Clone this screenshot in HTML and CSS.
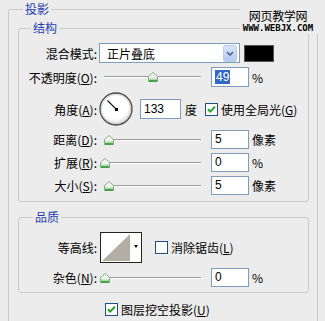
FILE: index.html
```html
<!DOCTYPE html>
<html>
<head>
<meta charset="utf-8">
<link rel="stylesheet" href="styles.css">
</head>
<body>
<div class="dialog">
  <div class="watermark">
    <div class="wm-cn">网页教学网</div>
    <div class="wm-en">WWW.WEBJX.COM</div>
  </div>
  <div class="outer">
    <div class="legend outer-legend">投影</div>
    <div class="group structure">
      <div class="legend structure-legend">结构</div>
      <div class="row r-blend">
        <span class="label">混合模式:</span>
        <div class="select">
          <span class="select-text">正片叠底</span>
          <span class="select-btn">
            <svg width="14" height="17" viewBox="0 0 14 17"><defs><linearGradient id="bg" x1="0" y1="0" x2="0" y2="1"><stop offset="0" stop-color="#dbe6fb"/><stop offset="1" stop-color="#b4c8f0"/></linearGradient></defs><rect x="0.5" y="0.5" width="13" height="16" rx="2" fill="url(#bg)" stroke="#b9cbef"/><path d="M4 7 L7 10 L10 7" fill="none" stroke="#4d6185" stroke-width="1.6"/></svg>
          </span>
        </div>
        <span class="swatch"></span>
      </div>
      <div class="row r-opacity">
        <span class="label">不透明度(<u>O</u>):</span>
        <div class="slider"><span class="track"></span><span class="thumb" style="left:48px"><svg width="10" height="10" viewBox="0 0 10 10"><defs><linearGradient id="tg1" x1="0" y1="0" x2="0" y2="1"><stop offset="0" stop-color="#ffffff"/><stop offset="0.6" stop-color="#e4f2e4"/><stop offset="1" stop-color="#5fb85f"/></linearGradient></defs><path d="M0.5 4.5 L5 0.5 L9.5 4.5 L9.5 9.5 L0.5 9.5 Z" fill="url(#tg1)" stroke="#8aa88a"/><path d="M1 9 L9 9" stroke="#2f9a2f" stroke-width="1.4"/></svg></span></div>
        <span class="input"><span class="sel">49</span></span>
        <span class="unit">%</span>
      </div>
      <div class="row r-angle">
        <span class="label">角度(<u>A</u>):</span>
        <span class="dial"><svg width="34" height="34" viewBox="0 0 34 34"><defs><radialGradient id="dg" cx="0.45" cy="0.4" r="0.6"><stop offset="0.7" stop-color="#ffffff"/><stop offset="1" stop-color="#d6d6d6"/></radialGradient></defs><circle cx="17" cy="17" r="16" fill="url(#dg)" stroke="#4a4a4a" stroke-width="1.3"/><circle cx="17" cy="17" r="14.6" fill="none" stroke="#c8c8c8" stroke-width="0.8"/><path d="M17.5 17.5 L8.5 8.5" stroke="#111" stroke-width="1.1"/><rect x="16" y="16" width="3" height="3" fill="#000"/></svg></span>
        <span class="input angle-input">133</span>
        <span class="unit deg">度</span>
        <span class="check checked"><svg width="13" height="13" viewBox="0 0 13 13"><rect x="0.5" y="0.5" width="12" height="12" fill="#fff" stroke="#1c5180"/><path d="M3 6.2 L5.2 8.6 L10 3.6" fill="none" stroke="#21a121" stroke-width="2"/></svg></span>
        <span class="check-text">使用全局光(<u>G</u>)</span>
      </div>
      <div class="row r-slider">
        <span class="label">距离(<u>D</u>):</span>
        <div class="slider"><span class="track"></span><span class="thumb" style="left:4px"><svg width="10" height="10" viewBox="0 0 10 10"><defs><linearGradient id="tg2" x1="0" y1="0" x2="0" y2="1"><stop offset="0" stop-color="#ffffff"/><stop offset="0.6" stop-color="#e4f2e4"/><stop offset="1" stop-color="#5fb85f"/></linearGradient></defs><path d="M0.5 4.5 L5 0.5 L9.5 4.5 L9.5 9.5 L0.5 9.5 Z" fill="url(#tg2)" stroke="#8aa88a"/><path d="M1 9 L9 9" stroke="#2f9a2f" stroke-width="1.4"/></svg></span></div>
        <span class="input">5</span>
        <span class="unit">像素</span>
      </div>
      <div class="row r-slider">
        <span class="label">扩展(<u>R</u>):</span>
        <div class="slider"><span class="track"></span><span class="thumb" style="left:0px"><svg width="10" height="10" viewBox="0 0 10 10"><defs><linearGradient id="tg3" x1="0" y1="0" x2="0" y2="1"><stop offset="0" stop-color="#ffffff"/><stop offset="0.6" stop-color="#e4f2e4"/><stop offset="1" stop-color="#5fb85f"/></linearGradient></defs><path d="M0.5 4.5 L5 0.5 L9.5 4.5 L9.5 9.5 L0.5 9.5 Z" fill="url(#tg3)" stroke="#8aa88a"/><path d="M1 9 L9 9" stroke="#2f9a2f" stroke-width="1.4"/></svg></span></div>
        <span class="input">0</span>
        <span class="unit">%</span>
      </div>
      <div class="row r-slider">
        <span class="label">大小(<u>S</u>):</span>
        <div class="slider"><span class="track"></span><span class="thumb" style="left:4px"><svg width="10" height="10" viewBox="0 0 10 10"><defs><linearGradient id="tg4" x1="0" y1="0" x2="0" y2="1"><stop offset="0" stop-color="#ffffff"/><stop offset="0.6" stop-color="#e4f2e4"/><stop offset="1" stop-color="#5fb85f"/></linearGradient></defs><path d="M0.5 4.5 L5 0.5 L9.5 4.5 L9.5 9.5 L0.5 9.5 Z" fill="url(#tg4)" stroke="#8aa88a"/><path d="M1 9 L9 9" stroke="#2f9a2f" stroke-width="1.4"/></svg></span></div>
        <span class="input">5</span>
        <span class="unit">像素</span>
      </div>
    </div>
    <div class="group quality">
      <div class="legend quality-legend">品质</div>
      <div class="row r-contour">
        <span class="label">等高线:</span>
        <span class="contour"><svg width="42" height="31" viewBox="0 0 42 31"><rect x="0.5" y="0.5" width="41" height="30" fill="#fff" stroke="#222"/><path d="M2 29 L30 2 L30 29 Z" fill="#b3aea3"/><path d="M34 13 L38 13 L36 16 Z" fill="#000"/></svg></span>
        <span class="check unchecked"><svg width="13" height="13" viewBox="0 0 13 13"><rect x="0.5" y="0.5" width="12" height="12" fill="#fff" stroke="#1c5180"/></svg></span>
        <span class="check-text">消除锯齿(<u>L</u>)</span>
      </div>
      <div class="row r-slider r-noise">
        <span class="label">杂色(<u>N</u>):</span>
        <div class="slider"><span class="track"></span><span class="thumb" style="left:0px"><svg width="10" height="10" viewBox="0 0 10 10"><defs><linearGradient id="tg5" x1="0" y1="0" x2="0" y2="1"><stop offset="0" stop-color="#ffffff"/><stop offset="0.6" stop-color="#e4f2e4"/><stop offset="1" stop-color="#5fb85f"/></linearGradient></defs><path d="M0.5 4.5 L5 0.5 L9.5 4.5 L9.5 9.5 L0.5 9.5 Z" fill="url(#tg5)" stroke="#8aa88a"/><path d="M1 9 L9 9" stroke="#2f9a2f" stroke-width="1.4"/></svg></span></div>
        <span class="input">0</span>
        <span class="unit">%</span>
      </div>
    </div>
    <div class="row r-knockout">
      <span class="check checked"><svg width="13" height="13" viewBox="0 0 13 13"><rect x="0.5" y="0.5" width="12" height="12" fill="#fff" stroke="#1c5180"/><path d="M3 6.2 L5.2 8.6 L10 3.6" fill="none" stroke="#21a121" stroke-width="2"/></svg></span>
      <span class="check-text">图层挖空投影(<u>U</u>)</span>
    </div>
  </div>
</div>
</body>
</html>
```

FILE: styles.css
```css
* { box-sizing: border-box; }
html, body { margin: 0; padding: 0; }
body {
  width: 325px;
  height: 321px;
  overflow: hidden;
  background: #ececec;
  font-family: "Noto Sans CJK SC", "Noto Sans", sans-serif;
  font-size: 12px;
  color: #000;
}
u { text-decoration: underline; text-underline-offset: 1px; }

.dialog {
  position: relative;
  padding: 9px 0 0 8px;
}

.watermark {
  position: absolute;
  top: 0;
  left: 240px;
  width: 85px;
  height: 34px;
  padding: 8px 9px 0 0;
  background: #ececec;
  display: flex;
  flex-direction: column;
  align-items: center;
}
.wm-cn {
  font-size: 12px;
  line-height: 16px;
  letter-spacing: -0.3px;
}
.wm-en {
  font-family: "DejaVu Sans Mono", monospace;
  font-weight: bold;
  font-size: 9px;
  line-height: 9px;
}

.outer {
  width: 310px;
  height: 320px;
  border: 1px solid #cbcbcb;
  border-bottom: none;
  border-radius: 3px 3px 0 0;
  padding: 0 8px 0 9px;
}

.legend {
  display: table;
  height: 14px;
  line-height: 14px;
  margin-top: -8px;
  padding: 0 2px;
  background: #ececec;
  color: #1f3fae;
}
.outer-legend { margin-left: 5px; }
.structure-legend { margin-left: 12px; }
.quality-legend { margin-left: 14px; }

.group {
  width: 291px;
  border: 1px solid #cbcbcb;
  border-radius: 3px;
}
.structure {
  margin-top: 12px;
  padding-bottom: 4px;
}
.quality {
  margin-top: 15px;
  padding-bottom: 3px;
}

.row {
  display: flex;
  align-items: center;
  white-space: nowrap;
}
.label {
  width: 78px;
  flex-shrink: 0;
  text-align: right;
}

.r-blend { margin-top: 7px; height: 22px; }
.r-opacity { height: 26px; }
.r-angle { height: 38px; }
.r-slider { height: 23px; }
.r-contour { margin-top: 8px; height: 31px; }
.r-noise { margin-top: 3px; }
.r-knockout { margin-top: 5px; height: 22px; padding-left: 87px; }

.select {
  margin-left: 2px;
  width: 141px;
  height: 20px;
  border: 1px solid #7f9db9;
  background: #fff;
  display: flex;
  align-items: center;
  justify-content: space-between;
  padding: 0 2px 0 7px;
}
.select-btn { display: flex; }
.swatch {
  margin-left: 4px;
  width: 30px;
  height: 17px;
  background: #000;
  border: 1px solid #555;
}

.slider {
  position: relative;
  margin-left: 3px;
  width: 101px;
  height: 12px;
}
.track {
  position: absolute;
  left: 4px;
  right: 0;
  top: 5px;
  height: 2px;
  border-top: 1px solid #9a9a9a;
  border-bottom: 1px solid #ffffff;
}
.thumb {
  position: absolute;
  top: 1px;
  display: flex;
}

.input {
  margin-left: 10px;
  width: 38px;
  height: 19px;
  border: 1px solid #7f9db9;
  background: #fff;
  font-family: "Liberation Sans", "DejaVu Sans", sans-serif;
  font-size: 12px;
  line-height: 17px;
  padding-left: 3px;
}
.sel {
  display: inline-block;
  background: #316ac5;
  color: #fff;
  line-height: 14px;
  padding: 0 1px;
}
.r-opacity .input { height: 20px; line-height: 18px; }
.unit { margin-left: 3px; }

.dial {
  margin-left: 2px;
  display: flex;
}
.angle-input {
  margin-left: 7px;
  width: 41px;
  height: 20px;
  line-height: 18px;
}
.deg { margin-left: 4px; }
.check { display: flex; }
.r-angle .check { margin-left: 8px; }
.check-text { margin-left: 3px; }
.contour { margin-left: 3px; display: flex; }
.r-contour .check { margin-left: 13px; }
```
